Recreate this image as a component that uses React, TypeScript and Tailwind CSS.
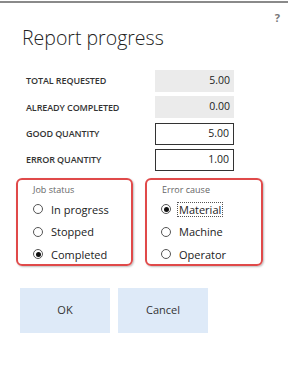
import React from "react";

function Radio({ checked, label, focus }: { checked?: boolean; label: string; focus?: boolean }) {
  return (
    <div className="flex items-center h-[22.5px]">
      <div className="w-[10px] h-[10px] rounded-full border border-[#555] flex items-center justify-center bg-white">
        {checked && <div className="w-[5px] h-[5px] rounded-full bg-[#111]" />}
      </div>
      <span
        className={
          "text-[11px] text-[#222] leading-[13px] " +
          (focus ? "ml-[7px] outline outline-1 outline-dotted outline-[#555] px-[1px]" : "ml-[8px]")
        }
      >
        {label}
      </span>
    </div>
  );
}

function Field({ label, value, editable }: { label: string; value: string; editable?: boolean }) {
  return (
    <div className="flex items-center h-[22px]">
      <div className="w-[129px] text-[9px] font-semibold text-[#333] tracking-[-0.1px]">{label}</div>
      <div
        className={
          "w-[79px] h-[22px] flex items-center justify-end pr-[4px] text-[10.5px] text-[#222] " +
          (editable ? "border-[1.5px] border-[#333] bg-white" : "bg-[#ebebeb]")
        }
      >
        {value}
      </div>
    </div>
  );
}

export default function App() {
  return (
    <div
      className="w-[290px] h-[365px] bg-white relative overflow-hidden"
      style={{ fontFamily: "'Open Sans', 'Noto Sans', sans-serif" }}
    >
      <div className="h-[2px] w-[288px] bg-[#8a8a8a] mt-[1px]" />
      <div className="absolute right-[10px] top-[10px] text-[11px] font-bold text-[#777]">?</div>
      <div className="pl-[22px] pt-[22px] text-[19.5px] font-light text-[#222] leading-[26px]">Report progress</div>
      <div className="pl-[26px] mt-[19px] flex flex-col gap-[4.3px]">
        <Field label="TOTAL REQUESTED" value="5.00" />
        <Field label="ALREADY COMPLETED" value="0.00" />
        <Field label="GOOD QUANTITY" value="5.00" editable />
        <Field label="ERROR QUANTITY" value="1.00" editable />
      </div>
      <div className="flex pl-[16px] mt-[7px] gap-[12px]">
        <div className="w-[117px] h-[88px] border-2 border-[#e04a4a] rounded-[6px] shadow-[1px_1px_2px_rgba(0,0,0,0.25)] pl-[15px] pt-[4px]">
          <div className="text-[9px] text-[#666] leading-[12px]">Job status</div>
          <div className="mt-[2px] flex flex-col">
            <Radio label="In progress" />
            <Radio label="Stopped" />
            <Radio label="Completed" checked />
          </div>
        </div>
        <div className="w-[118px] h-[88px] border-2 border-[#e04a4a] rounded-[6px] shadow-[1px_1px_2px_rgba(0,0,0,0.25)] pl-[14px] pt-[4px]">
          <div className="text-[9px] text-[#666] leading-[12px] pl-[1px]">Error cause</div>
          <div className="mt-[2px] flex flex-col">
            <Radio label="Material" checked focus />
            <Radio label="Machine" />
            <Radio label="Operator" />
          </div>
        </div>
      </div>
      <div className="flex pl-[20px] mt-[22px] gap-[8px]">
        <button className="w-[90px] h-[45px] bg-[#deeaf8] text-[11px] text-[#333]">OK</button>
        <button className="w-[90px] h-[45px] bg-[#deeaf8] text-[11px] text-[#333]">Cancel</button>
      </div>
    </div>
  );
}
